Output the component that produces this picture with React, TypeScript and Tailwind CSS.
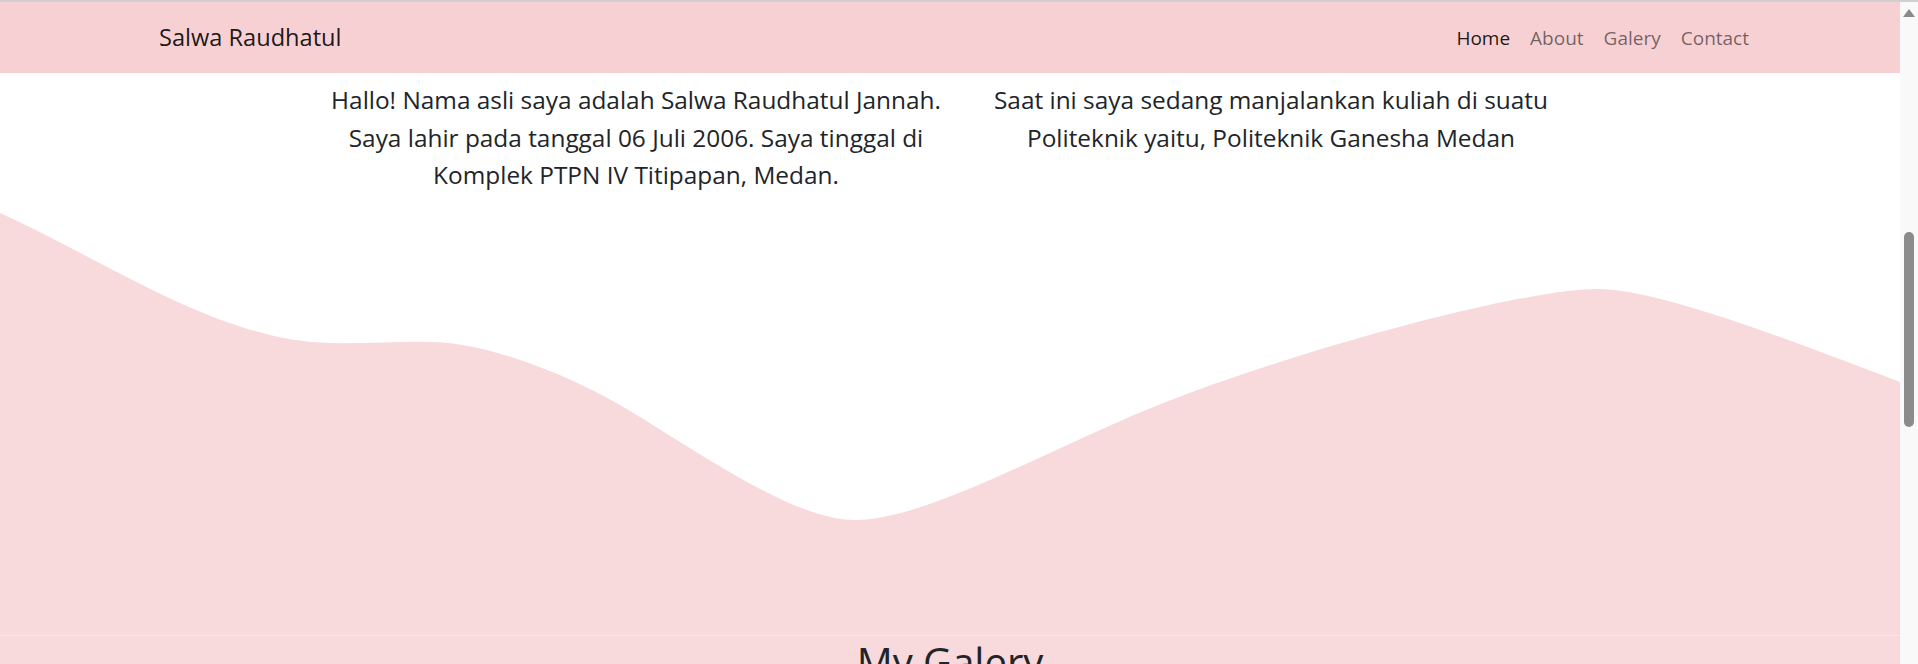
export default function App() {
  const links = ['Home', 'About', 'Galery', 'Contact']

  return (
    <div className="h-[664px] overflow-hidden flex flex-col bg-white font-['Open_Sans',sans-serif] text-[#212529]">
      <div className="h-[2px] shrink-0 bg-[#d0d0d0]" />
      <div className="flex flex-1 min-h-0">
        <main className="w-[1900px] shrink-0 overflow-hidden">
          {/* navbar */}
          <nav className="h-[71px] bg-[#f7d0d3] flex items-center justify-between pl-[159px] pr-[141px]">
            <a className="text-[23.6px] leading-[37px] text-black/90">Salwa Raudhatul</a>
            <ul className="flex">
              {links.map((l, i) => (
                <li key={l}>
                  <a className={`px-[10px] text-[19px] leading-[30px] ${i === 0 ? 'text-black/90' : 'text-black/55'}`}>
                    {l}
                  </a>
                </li>
              ))}
            </ul>
          </nav>

          {/* about */}
          <section className="h-[140px] pt-[8px] pl-[7px] flex justify-center">
            <p className="w-[635px] text-center text-[24.4px] leading-[37.5px]">
              Hallo! Nama asli saya adalah Salwa Raudhatul Jannah.
              <br />
              Saya lahir pada tanggal 06 Juli 2006. Saya tinggal di
              <br />
              Komplek PTPN IV Titipapan, Medan.
            </p>
            <p className="w-[635px] text-center text-[24.4px] leading-[37.5px]">
              Saat ini saya sedang manjalankan kuliah di suatu
              <br />
              Politeknik yaitu, Politeknik Ganesha Medan
            </p>
          </section>

          {/* wave */}
          <svg className="block w-[1900px] h-[422px]" viewBox="0 0 1900 422">
            <path
              fill="#f8d9dc"
              d="M0,0 C110,50 220,128 330,130 C370,131 400,128 430,129 C490,129 580,166 640,204 C720,254 800,307 855,307 C930,307 1061,229 1171,187 C1300,137 1520,76 1598,76 C1660,76 1800,131 1900,169 L1900,422 L0,422 Z"
            />
          </svg>
          <div className="h-px bg-[#fbe7e9]" />

          {/* gallery */}
          <section className="bg-[#f8d9dc] pt-[2px] h-[200px] text-center">
            <h2 className="text-[40px] leading-[48px] font-medium">My Galery</h2>
          </section>
        </main>

        {/* scrollbar */}
        <aside className="w-[18px] shrink-0 bg-[#f9f9f9] flex flex-col items-center pt-[7px]">
          <svg width="12" height="8" viewBox="0 0 12 8">
            <path d="M6,0 L12,8 L0,8 Z" fill="#8a8a8a" />
          </svg>
          <div className="mt-[215px] h-[195px] w-[10px] rounded-full bg-[#8b8b8b]" />
        </aside>
      </div>
    </div>
  )
}
